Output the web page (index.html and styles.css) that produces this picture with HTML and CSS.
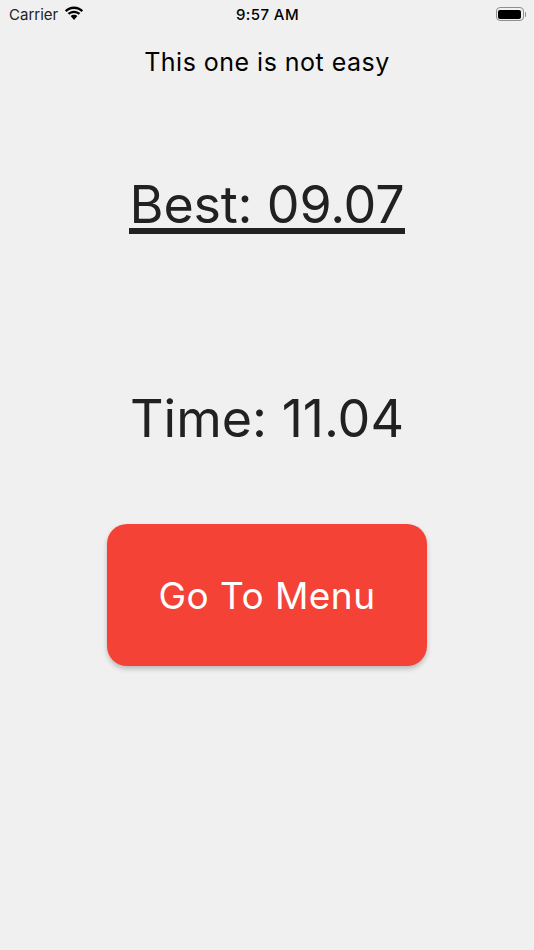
FILE: index.html
```html
<!DOCTYPE html>
<html lang="en">
<head>
<meta charset="utf-8">
<title>Result</title>
<link rel="stylesheet" href="styles.css">
</head>
<body>
<div class="status">
  <div class="status-left">
    <span class="carrier">Carrier</span>
    <svg class="wifi" width="20" height="15" viewBox="0 0 20 15"><path d="M10 2.900c2.900 0 5.500 1.100 7.500 3l1.600-1.700C16.700 1.900 13.500.5 10 .5S3.300 1.900.9 4.200l1.600 1.700c2-1.900 4.600-3 7.500-3z"/><path d="M10 7c1.800 0 3.400.7 4.700 1.800l1.600-1.700C14.600 5.600 12.400 4.700 10 4.700s-4.600.9-6.300 2.400l1.600 1.700C6.600 7.700 8.200 7 10 7z"/><path d="M10 8.800c-1.300 0-2.500.5-3.400 1.300L10 14l3.400-3.900c-.9-.8-2.100-1.300-3.400-1.300z"/></svg>
  </div>
  <span class="clock">9:57 AM</span>
  <div class="battery"><span class="battery-shell"><span class="battery-fill"></span></span><span class="battery-tip"></span></div>
</div>
<main class="content">
  <p class="subtitle">This one is not easy</p>
  <p class="best"><span class="best-text">Best: 09.07</span></p>
  <p class="time">Time: 11.04</p>
  <button class="menu-btn" type="button">Go To Menu</button>
</main>
</body>
</html>
```

FILE: styles.css
```css
* { box-sizing: border-box; }
html, body { margin: 0; padding: 0; }
body {
  width: 534px;
  height: 950px;
  overflow: hidden;
  background: #f0f0f0;
  font-family: Inter, "Liberation Sans", sans-serif;
  color: #212121;
}
.status {
  height: 28px;
  display: grid;
  grid-template-columns: 1fr auto 1fr;
  align-items: center;
  padding: 0 8px 0 9px;
  color: #000;
}
.status-left { display: flex; align-items: center; gap: 6px; }
.carrier { font-size: 15px; color: #222; }
.wifi { display: block; margin-top: -2px; }
.clock { font-size: 15px; font-weight: 500; letter-spacing: .4px; }
.battery { justify-self: end; display: flex; align-items: center; gap: 1px; }
.battery-shell {
  width: 28px;
  height: 14px;
  border: 1.200px solid #8f8f8f;
  border-radius: 4px;
  padding: 1.500px;
  display: block;
}
.battery-fill { display: block; height: 100%; background: #000; border-radius: 2px; }
.battery-tip { width: 1.500px; height: 5px; background: #8f8f8f; border-radius: 0 1px 1px 0; }
.content { display: flex; flex-direction: column; align-items: center; }
.subtitle { margin: 16px 0 0; font-size: 25px; line-height: 36px; color: #000; letter-spacing: .48px; }
.best { margin: 90px 0 0; font-size: 52px; line-height: 62px; font-weight: 400; letter-spacing: -.2px; }
.best-text { display: block; border-bottom: 6px solid #212121; line-height: 56px; padding: 7px 1px 0 1px; height: 64px; }
.time { margin: 154px 0 0; font-size: 52px; line-height: 62px; font-weight: 400; }
.menu-btn {
  margin-top: 74px;
  width: 320px;
  height: 142px;
  border: 0;
  border-radius: 20px;
  background: #f44336;
  color: #fff;
  font: 400 37px Inter, "Liberation Sans", sans-serif;
  letter-spacing: .45px;
  box-shadow: 0 3px 5px rgba(0,0,0,.22);
}
```
